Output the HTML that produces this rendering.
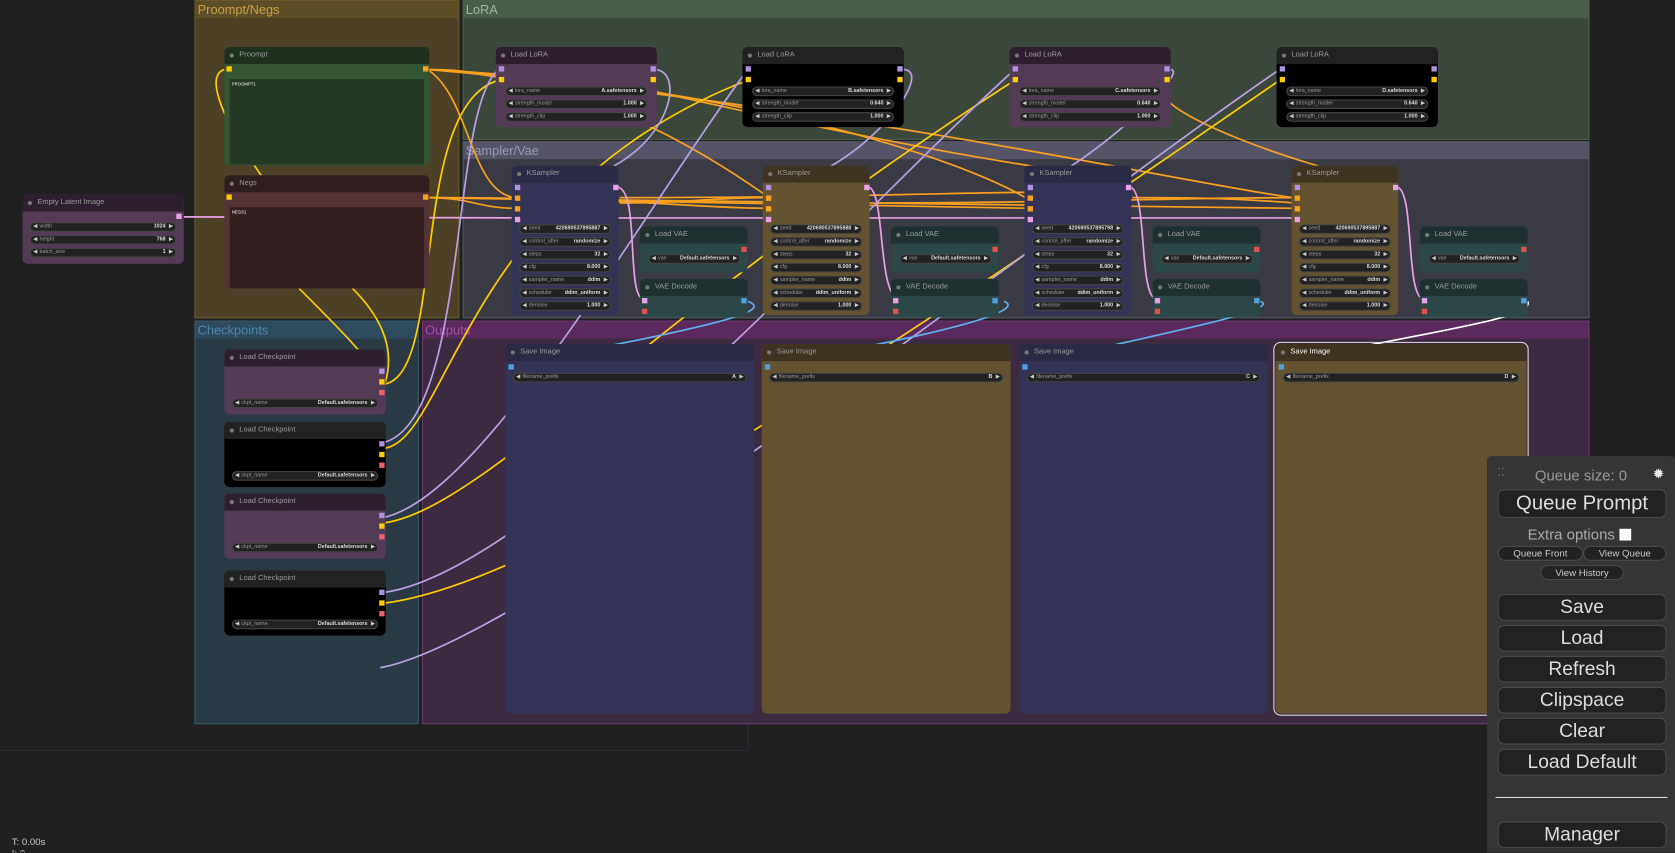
<!DOCTYPE html>
<html><head><meta charset="utf-8"><style>
*{box-sizing:border-box;margin:0;padding:0}
html,body{width:1675px;height:853px;overflow:hidden;background:#202020;font-family:"Liberation Sans",sans-serif}
#root{position:absolute;left:0;top:0;width:1568px;height:798px;transform:scale(1.06824);transform-origin:0 0;overflow:hidden}
.g{position:absolute}
.g .t{height:16px;font-size:12px;line-height:16px;padding-left:2px}
.n{position:absolute;border-radius:5px;overflow:hidden}
.n .h{height:16px;font-size:7px;line-height:16px;color:#999;padding-left:14px;position:relative}
.n .h:before{content:"";position:absolute;left:5px;top:6px;width:4px;height:4px;border-radius:50%;background:#777}
.w{position:absolute;height:9px;border-radius:5px;background:#222;border:1px solid #444;font-size:5px;color:#999;line-height:7px;padding:0 8px}
.w:before{content:"◀";position:absolute;left:2px;color:#ccc;font-size:5px}
.w:after{content:"▶";position:absolute;right:2px;color:#ccc;font-size:5px}
.w b{position:absolute;right:9px;color:#ddd;font-weight:bold}
.s{position:absolute;width:5px;height:5px}
#panel{position:absolute;left:1392px;top:427px;width:176px;height:371px;background:#353535;border-radius:4px 4px 0 0}
.btn{position:absolute;left:10px;width:158px;height:25px;background:#222;border:1px solid #4a4a4a;border-radius:6px;color:#ddd;font-size:18px;text-align:center;line-height:23px}
.sb{position:absolute;height:14px;background:#222;border:1px solid #4a4a4a;border-radius:7px;color:#ccc;font-size:9px;text-align:center;line-height:12px}
</style></head><body><div id="root">
<div class="g" style="left:182px;top:0;width:248px;height:298px;background:#4c4127;border:1px solid #6a5a28"><div class="t" style="background:#5c4e26;color:#c8a040">Proompt/Negs</div></div>
<div class="g" style="left:433px;top:0;width:1055px;height:131px;background:#3c473c;border:1px solid #4b5e4b"><div class="t" style="background:#4a5d4a;color:#9ab89a">LoRA</div></div>
<div class="g" style="left:433px;top:132px;width:1055px;height:166px;background:#3a3a44;border:1px solid #545466"><div class="t" style="background:#545466;color:#9a9ab8">Sampler/Vae</div></div>
<div class="g" style="left:182px;top:300px;width:210px;height:378px;background:#2a3a45;border:1px solid #385a6a"><div class="t" style="background:#2e4a5c;color:#4a8ab0">Checkpoints</div></div>
<div class="g" style="left:395px;top:300px;width:1093px;height:378px;background:#3c2a40;border:1px solid #6a3a6a"><div class="t" style="background:#5a2a5c;color:#a050a8">Outputs</div></div>
<div style="position:absolute;left:0;top:702px;width:700px;height:1px;background:#2a2e3a"></div>
<div style="position:absolute;left:700px;top:678px;width:1px;height:24px;background:#2a2e3a"></div>
<svg id="wires" style="position:absolute;left:0;top:0" width="1568" height="798" fill="none" stroke-width="1.6"></svg>
<div id="nodes"></div>
<div style="position:absolute;left:11px;top:783px;color:#ccc;font-size:9px;line-height:11px">T: 0.00s<br>I: 0</div>
<div id="panel">
<div style="position:absolute;left:10px;top:10px;color:#888;font-size:10px">⁚⁚</div>
<div style="position:absolute;left:0;width:176px;top:10px;text-align:center;color:#999;font-size:14px">Queue size: 0</div>
<div style="position:absolute;left:155px;top:9px;color:#eee;font-size:13px">✹</div>
<div class="btn" style="top:31px;height:27px;line-height:25px;font-size:19px">Queue Prompt</div>
<div style="position:absolute;left:38px;top:65px;color:#aaa;font-size:14px">Extra options <span style="display:inline-block;width:11px;height:11px;background:#fff;vertical-align:-1px"></span></div>
<div class="sb" style="left:10px;top:84px;width:80px">Queue Front</div>
<div class="sb" style="left:90px;top:84px;width:78px">View Queue</div>
<div class="sb" style="left:50px;top:102px;width:78px">View History</div>
<div class="btn" style="top:129px">Save</div>
<div class="btn" style="top:158px">Load</div>
<div class="btn" style="top:187px">Refresh</div>
<div class="btn" style="top:216px">Clipspace</div>
<div class="btn" style="top:245px">Clear</div>
<div class="btn" style="top:274px">Load Default</div>
<div style="position:absolute;left:8px;top:319px;width:161px;height:1px;background:#ddd"></div>
<div class="btn" style="top:342px">Manager</div>
</div>
</div>
<script>
var N=document.getElementById('nodes'),h='';
var P={p:['#2e1f2e','#533a55'],k:['#222','#000'],b:['#2a2a45','#333355'],y:['#3e3220','#635331'],t:['#1e3030','#2b4747'],gr:['#1f301f','#335533'],r:['#2e1e1e','#533333']};
function node(x,y,w,hh,title,c,extra,sel){h+='<div class="n" style="left:'+x+'px;top:'+y+'px;width:'+w+'px;height:'+hh+'px;background:'+P[c][1]+(sel?';outline:1px solid #ddd;outline-offset:1px':'')+'"><div class="h" style="background:'+P[c][0]+(sel?';color:#fff':'')+'">'+title+'</div>'+(extra||'')+'</div>';}
function wd(x,y,w,l,v){return '<div class="w" style="left:'+x+'px;top:'+y+'px;width:'+w+'px">'+l+'<b>'+v+'</b></div>';}
function sl(x,y,c){return '<div class="s" style="left:'+x+'px;top:'+y+'px;background:'+c+'"></div>';}
node(21,182,151,65,'Empty Latent Image','p',sl(144,18,'#e8a0e8')+wd(7,26,137,'width','1024')+wd(7,38,137,'height','768')+wd(7,50,137,'batch_size','1'));
node(210,44,192,111,'Proompt','gr',sl(2,18,'#fc0')+sl(186,18,'#f9a020')+'<div style="position:absolute;left:5px;top:30px;width:182px;height:80px;background:#243824;color:#fff;font-size:4px;padding:2px">PROOMPT1</div>');
node(210,164,192,106,'Negs','r',sl(2,18,'#fc0')+sl(186,18,'#f9a020')+'<div style="position:absolute;left:5px;top:30px;width:182px;height:76px;background:#331f1f;color:#fff;font-size:4px;padding:2px">NEGS1</div>');
var lx=[464,695,945,1195],ln=['A','B','C','D'],lc=['p','k','p','k'],lv=['1.000','0.640','0.640','0.640'];
for(var i=0;i<4;i++){node(lx[i],44,151,75,'Load LoRA',lc[i],sl(3,18,'#b090e0')+sl(3,28,'#fc0')+sl(145,18,'#b090e0')+sl(145,28,'#fc0')+wd(9,37,133,'lora_name',ln[i]+'.safetensors')+wd(9,49,133,'strength_model',lv[i])+wd(9,61,133,'strength_clip','1.000'));}
var kx=[479,714,959,1209],kc=['b','y','b','y'],sd=['420690537895887','420690537895888','420690537895798','420690537895887'];
for(i=0;i<4;i++){var e=sl(3,18,'#b090e0')+sl(3,28,'#f9a020')+sl(3,38,'#f9a020')+sl(3,48,'#e8a0e8')+sl(95,18,'#e8a0e8');var L=[['seed',sd[i]],['control_after',' randomize'],['steps','32'],['cfg','8.000'],['sampler_name','ddim'],['scheduler','ddim_uniform'],['denoise','1.000']];for(var j=0;j<7;j++)e+=wd(7,55+j*12,86,L[j][0],L[j][1]);node(kx[i],155,100,140,'KSampler',kc[i],e);
var vx=kx[i]+120;node(vx,212,101,43,'Load VAE','t',sl(95,19,'#e05050')+wd(8,26,86,'vae','Default.safetensors'));node(vx,261,101,36,'VAE Decode','t',sl(2,18,'#e8a0e8')+sl(2,28,'#e05050')+sl(95,18,'#50a0e0'));}
var sx=[473,713,954,1194],sw=[233,233,233,235];
for(i=0;i<4;i++){node(sx[i],322,sw[i],346,'Save Image',kc[i],sl(3,19,'#50a0e0')+wd(7,27,sw[i]-14,'filename_prefix',ln[i]),i==3);}
var cy=[327,395,462,534];
for(i=0;i<4;i++){node(210,cy[i],151,61,'Load Checkpoint',lc[i],sl(145,18,'#b090e0')+sl(145,28,'#fc0')+sl(145,38,'#f06070')+wd(7,46,137,'ckpt_name','Default.safetensors'));}
N.innerHTML=h;
var W=[
['#f9a020','M400 65 C440 65 440 70 470 70'],['#f9a020','M400 65 C500 70 600 100 720 185'],['#f9a020','M400 65 C440 90 440 180 482 185'],['#f9a020','M400 65 C700 80 900 150 960 185'],['#f9a020','M400 65 C800 100 1100 170 1210 185'],
['#f9a020','M400 185 C440 185 450 195 482 195'],['#f9a020','M400 185 C600 185 650 195 720 195'],['#f9a020','M400 185 C700 190 900 195 965 195'],['#f9a020','M400 185 C900 190 1100 195 1212 195'],
['#f9a020','M580 190 C650 190 660 185 720 185'],['#f9a020','M580 185 C800 185 900 180 965 180'],['#f9a020','M820 190 C1000 190 1100 185 1212 185'],['#f9a020','M1060 185 C1100 185 1150 185 1212 190'],['#f9a020','M610 85 C900 150 1000 160 1060 170'],['#f9a020','M1090 90 C1100 110 1200 150 1290 170'],
['#e8a0e8','M172 203 L480 204'],['#e8a0e8','M480 204 L1212 204'],['#e8a0e8','M577 175 C600 175 585 280 603 280'],['#e8a0e8','M812 175 C830 175 820 280 843 280'],['#e8a0e8','M1057 175 C1075 175 1065 280 1083 280'],['#e8a0e8','M1307 175 C1325 175 1315 280 1333 280'],
['#fc0','M356 360 C420 360 380 100 467 75'],['#fc0','M356 420 C420 420 430 180 700 75'],['#fc0','M356 490 C450 480 600 300 950 75'],['#fc0','M356 565 C500 550 800 350 1198 75'],['#fc0','M210 65 C195 70 200 100 245 165'],['#fc0','M280 270 C320 310 340 330 356 355'],['#fc0','M330 270 C360 300 370 330 360 360'],
['#b9a0e0','M356 415 C440 400 420 100 467 65'],['#b9a0e0','M356 485 C450 470 600 200 700 65'],['#b9a0e0','M356 555 C500 540 800 200 950 65'],['#b9a0e0','M356 625 C500 600 1000 200 1198 65'],['#b9a0e0','M612 65 C650 65 620 180 482 175'],['#b9a0e0','M845 65 C880 65 800 170 718 175'],['#b9a0e0','M1095 65 C1120 65 1000 170 962 175'],
['#60b0f0','M700 282 C720 290 700 300 476 342'],['#60b0f0','M940 282 C960 290 900 310 716 342'],['#60b0f0','M1180 282 C1200 290 1100 310 957 342'],['#fff','M1430 282 C1440 300 1300 315 1197 342']];
var s='';W.forEach(function(a){s+='<path stroke="'+a[0]+'" d="'+a[1]+'"/>';});document.getElementById('wires').innerHTML=s;
</script>
</body></html>
